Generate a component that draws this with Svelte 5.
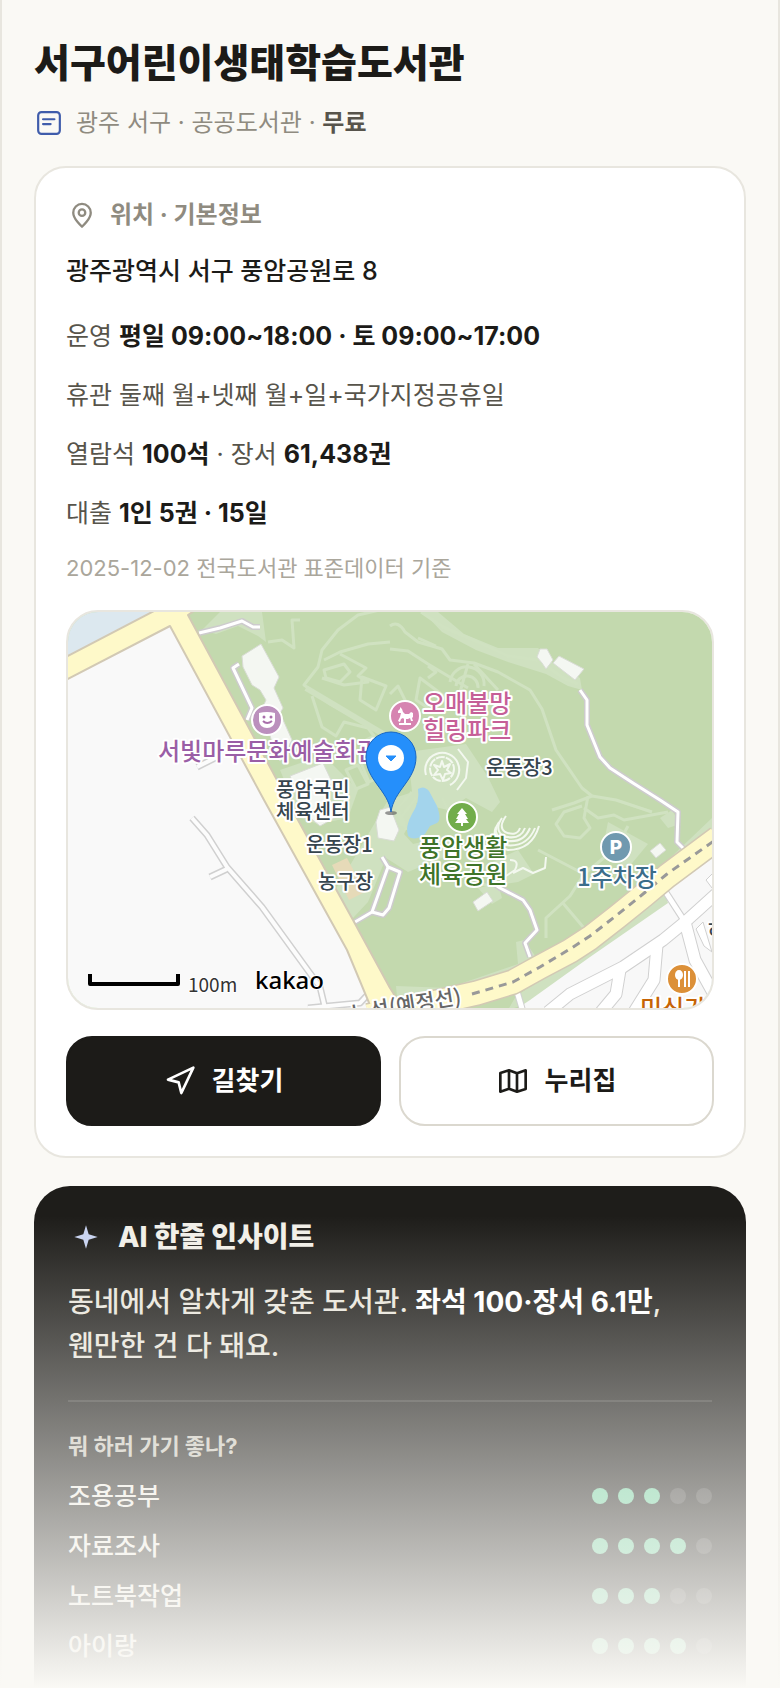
<script lang="ts">
  const library = {
    name: '서구어린이생태학습도서관',
    region: '광주 서구',
    type: '공공도서관',
    fee: '무료',
    address: '광주광역시 서구 풍암공원로 8',
    baseDate: '2025-12-02'
  };

  const purposes = [
    { name: '조용공부', score: 3 },
    { name: '자료조사', score: 4 },
    { name: '노트북작업', score: 3 },
    { name: '아이랑', score: 4 }
  ];

  const dots = [1, 2, 3, 4, 5];

  // 공원 산책로 (연한 초록)
  const trails = [
    'M353 0L375 15L410 30L440 44L470 48',
    'M322 14Q330 8 337 20L350 30L374 37L382 48L406 51L430 60L462 78L474 97L488 138L514 176L524 184',
    'M322 37L340 39L360 52L380 64L400 76',
    'M312 -2L290 3L270 18L254 38L250 55L236 73L262 92L290 108L320 126',
    'M322 30L300 32L272 40L256 48',
    'M272 42L298 56L290 64L300 70L276 73L254 66',
    'M256 58L276 52L282 60L272 70L258 66Z',
    'M294 65L318 74L308 98L292 88Z',
    'M244 84L254 115L268 124L276 110L300 116L306 124L290 132',
    'M200 30L214 28L226 36L224 8L232 8',
    'M480 55L495 66L510 72',
    'M382 70A17 17 0 0 1 416 74',
    'M388 74A11 11 0 0 1 410 76',
    'M400 52L392 80M406 52L430 78M368 34L350 26M360 54L368 60L360 66',
    'M352 66L376 84L366 100L348 88Z',
    'M322 82L330 74L338 90',
    'M524 184L506 191L484 198M524 184L548 188L584 200M520 184L516 206L522 216L512 226L496 224L488 212L496 200L514 194',
    'M516 196L530 206L546 203L556 208L600 200',
    'M470 238L516 262L502 284L478 306V326M494 290L516 316M516 262L548 236L560 214',
    'M344 180L330 196L334 214M348 186L334 204L338 218M374 186L380 198',
    'M278 158L290 153L300 172L288 177Z',
    'M293 151L302 147L310 166L301 170Z',
    'M400 260L414 272L430 276'
  ];

  // 차가 다니는 길
  const lanes = [
    'M131 21L152 16L174 9L185 15H192',
    'M171 52L165 56L184 96L179 108',
    'M512 78L519 88V113L532 145L542 156L565 171L592 188L610 200L609 230L617 238',
    'M420 268L432 276L455 288L462 298L469 318L457 331L462 345',
    'M314 245L320 255L304 300L287 310',
    'M320 255L332 260L321 296L315 303L304 300'
  ];

  const alleys = [
    'M124 206L139 223L159 255L194 295L252 375L257 396',
    'M142 265L159 257',
    'M129 155L149 145'
  ];

  const streets = [
    'M480 400L502 382L555 355L595 328L617 310L648 282',
    'M617 310L627 348L648 386',
    'M589 333L586 368L566 400',
    'M552 358L548 382L533 400'
  ];

  const places = [
    { text: '서빛마루문화예술회관', x: 90, y: 148, size: 24, color: '#9a5ea6' },
    { text: '오매불망', x: 355, y: 100, size: 24, color: '#c65f97' },
    { text: '힐링파크', x: 355, y: 127, size: 24, color: '#c65f97' },
    { text: '운동장3', x: 418, y: 163, size: 20, color: '#36454e' },
    { text: '풍암국민', x: 208, y: 185, size: 20, color: '#36454e' },
    { text: '체육센터', x: 208, y: 207, size: 20, color: '#36454e' },
    { text: '운동장1', x: 238, y: 240, size: 20, color: '#36454e' },
    { text: '농구장', x: 250, y: 277, size: 20, color: '#36454e' },
    { text: '풍암생활', x: 351, y: 244, size: 24, color: '#3f7429' },
    { text: '체육공원', x: 351, y: 271, size: 24, color: '#3f7429' },
    { text: '1주차장', x: 509, y: 274, size: 24, color: '#3b6d8a' },
    { text: '미식가', x: 572, y: 405, size: 24, color: '#c66405' },
    { text: '하', x: 640, y: 326, size: 20, color: '#36454e' }
  ];
</script>

<svelte:head>
  <title>{library.name}</title>
</svelte:head>

<main class="page">
  <header class="head">
    <h1>{library.name}</h1>
    <p class="sub">
      <svg class="sub-icon" viewBox="0 0 24 24" aria-hidden="true">
        <rect x="2" y="2" width="20" height="20" rx="3" />
        <path d="M6.500 8.500H17M6.500 13H13.500" />
      </svg>
      <span>{library.region} · {library.type} · <strong>{library.fee}</strong></span>
    </p>
  </header>

  <section class="card">
    <h2 class="card-title">
      <svg viewBox="0 0 24 24" aria-hidden="true">
        <path d="M12 22C12 22 4.500 15.500 4.500 10A7.500 7.500 0 0 1 19.500 10C19.500 15.500 12 22 12 22Z" />
        <circle cx="12" cy="10" r="2.800" />
      </svg>
      위치 · 기본정보
    </h2>

    <p class="address">{library.address}</p>

    <div class="info">
      <p>운영 <b>평일 09:00~18:00 · 토 09:00~17:00</b></p>
      <p>휴관 둘째 월+넷째 월+일+국가지정공휴일</p>
      <p>열람석 <b>100석</b> · 장서 <b>61,438권</b></p>
      <p>대출 <b>1인 5권 · 15일</b></p>
    </div>

    <p class="source">{library.baseDate} 전국도서관 표준데이터 기준</p>

    <div class="map">
      <svg viewBox="0 0 644 396" preserveAspectRatio="xMidYMid slice" role="img" aria-label="도서관 위치 지도">
        <rect width="644" height="396" fill="#c3d9ae" />

        <!-- 공원 안 밝은 구역 -->
        <g fill="#cfe1c0">
          <path d="M355 0H370L396 22L430 36L470 36L486 52L512 66L514 78L500 74L478 62L440 50L408 38L374 20Z" />
          <path d="M134 18L152 0H194L198 30L190 24L170 14L148 22Z" />
          <path d="M340 140L398 132L420 165L432 190L424 200L398 186L380 198L345 190Z" />
          <path d="M212 158L250 145L262 150L290 178L280 206L250 212L232 206Z" />
          <path d="M320 188L345 180L350 196L336 222L345 232L380 224L388 240L340 260L318 246L300 290L285 306L266 280L290 240Z" />
          <path d="M420 252L450 238L466 262L450 270L424 274Z" />
          <path d="M540 210L580 232L560 256L534 240Z" />
          <path d="M592 206L604 198L612 212L600 216Z" />
          <path d="M410 276L430 272L434 286L424 292Z" />
          <path d="M328 374L380 376L450 352L448 330L456 328L468 345L520 314L600 248L644 206V240L540 326L450 378L330 396Z" />
          <path d="M448 384L522 336L600 280L602 292L522 348L470 388L440 398Z" />
        </g>
        <g fill="none" stroke="#d0e2c1" stroke-width="3" stroke-linejoin="round">
          {#each trails as d}
            <path {d} />
          {/each}
        </g>
        <path d="M238 76L322 126" stroke="#cfe1c0" stroke-width="6" />

        <!-- 건물 -->
        <g fill="#f4f7f2" stroke="#d9dcd5" stroke-width="1">
          <path d="M193 32L174 44L175 55L184 73L192 78L198 88L195 95L205 135L212 149L224 128L212 101L215 96L206 76L211 65Z" />
          <path d="M472 37H479L485 48L478 57L474 51L469 45Z" />
          <path d="M491 44L516 57L507 68L485 51Z" />
          <path d="M405 290L419 280L425 289L410 299Z" />
          <path d="M582 239L592 231L598 238L588 246Z" />
          <path d="M312 198L322 195L331 218L326 229L310 226L308 210Z" />
          <path d="M222 164L255 151L264 170L258 186L270 204L252 214L240 204Z" />
        </g>
        <path d="M264 253L279 246L297 280L281 288Z" fill="#e6dab8" />
        <path
          d="M350 177Q356 173 361 179L369 194Q374 208 369 211L362 214L357 222Q346 230 340 224Q337 214 344 202Q352 190 350 177Z"
          fill="#a3d4ec"
        />

        <!-- 원형 광장과 야외무대 -->
        <g fill="none" stroke="#f3f8ef" stroke-width="2">
          <circle cx="374" cy="157" r="12" stroke-dasharray="9 1" />
          <path d="M358 163A17 17 0 1 1 382 173" />
          <path d="M390 137L400 150L398 166L389 178" />
          <path
            d="M374 149L376 155L382 152L379 158L383 161L377 162L375 168L372 162L366 163L370 158L366 153L372 155Z"
          />
          <path d="M438 204Q430 215 437 220Q449 225 452 216" />
          <path d="M434 206Q426 217 435 224Q452 229 457 216" />
          <path d="M431 210Q423 221 435 228Q455 233 462 216" />
          <path d="M428 215Q423 227 437 233Q459 236 467 216" />
          <path d="M426 222Q428 235 440 238Q464 238 471 214" />
          <path d="M478 245L477 256L465 261L455 256L445 261" />
          <path d="M442 248Q452 248 447 258L438 264" />
        </g>

        <!-- 남동쪽 시가지 -->
        <path d="M600 291L522 345L462 388L450 396H644V236L597 280Z" fill="#f8f8f8" />
        <g fill="none" stroke="#d0d0d0" stroke-width="13" stroke-linejoin="round">
          {#each streets as d}
            <path {d} />
          {/each}
          <path d="M595 276L617 310" stroke-width="7" />
          <path d="M448 376L455 400" stroke-width="7" />
        </g>
        <g fill="none" stroke="#fff" stroke-width="11" stroke-linejoin="round">
          {#each streets as d}
            <path {d} />
          {/each}
          <path d="M595 276L617 310" stroke-width="5" />
          <path d="M448 376L455 400" stroke-width="5" />
        </g>
        <g fill="#fff" stroke="#d0d0d0">
          <path d="M644 262L638 268L644 276" />
          <path d="M644 340L635 310L628 317L636 334Z" />
        </g>

        <!-- 북서쪽: 물가, 공터 -->
        <path d="M0 0H85L0 44Z" fill="#dce8ef" />
        <path d="M0 67L102 14L196 188L279 338L312 396H0Z" fill="#f9f9f9" />
        <g fill="none" stroke="#d0d0d0" stroke-width="7" stroke-linejoin="round">
          {#each alleys as d}
            <path {d} />
          {/each}
          <path d="M240 396L292 391L306 376" />
        </g>
        <g fill="none" stroke="#fcfcfc" stroke-width="4" stroke-linejoin="round">
          {#each alleys as d}
            <path {d} />
          {/each}
          <path d="M240 396L292 391L306 376" />
        </g>

        <g fill="none" stroke="#cdcbcd" stroke-width="6" stroke-linejoin="round">
          {#each lanes as d}
            <path {d} />
          {/each}
        </g>
        <g fill="none" stroke="#fff" stroke-width="3" stroke-linejoin="round">
          {#each lanes as d}
            <path {d} />
          {/each}
        </g>

        <!-- 큰길 -->
        <g stroke="#d2c9b4" stroke-width="2">
          <path
            d="M300 404L360 392L409 381L445 370L472 355L502 339L522 326L549 305L575 284L599 264L650 226"
            fill="none"
            stroke-width="26"
          />
          <path d="M-2 45L86 -1H126L120 3L209 168L230 208L285 308L322 376L336 398H304L279 338L196 188L102 14L-2 68Z" fill="#fef9c9" />
        </g>
        <path
          d="M300 404L360 392L409 381L445 370L472 355L502 339L522 326L549 305L575 284L599 264L650 226"
          fill="none"
          stroke="#fef9c9"
          stroke-width="23"
        />
        <path
          d="M404 382L445 370L472 355L502 337L522 324L549 303L575 282L599 262L650 226"
          fill="none"
          stroke="#999"
          stroke-width="3"
          stroke-dasharray="8 6"
        />

        <!-- 장소 이름 -->
        <g class="label">
          {#each places as p}
            <text x={p.x} y={p.y} font-size={p.size} fill={p.color}>{p.text}</text>
          {/each}
          <text x="284" y="409" font-size="21" fill="#666" transform="rotate(-9 284 409)">노선(예정선)</text>
          <text class="scale" x="120" y="380" font-size="19" fill="#333">100m</text>
          <text class="brand" x="187" y="377" font-size="24" fill="#000">kakao</text>
        </g>
        <path d="M22 362V372H110V362" fill="none" stroke="#000" stroke-width="4" />

        <!-- 장소 아이콘 -->
        <g transform="translate(199 108)">
          <circle r="15" fill="#bb90bd" stroke="#fff" stroke-width="2" />
          <path d="M-8 -7Q0 -9 8 -7V1Q7 8 0 8T-8 1Z" fill="#fff" />
          <circle cx="-3" cy="-3" r="1.500" fill="#a96fab" />
          <circle cx="4" cy="-3" r="1.500" fill="#a96fab" />
          <path d="M-4 1Q0 5 5 1" fill="none" stroke="#a96fab" stroke-width="2" />
        </g>
        <g transform="translate(337 104)">
          <circle r="15" fill="#d684b1" stroke="#fff" stroke-width="2" />
          <path
            d="M-7 -5L-5 -7V-9L-3 -7L-2 -4L0 -2H4L6 -4L8 -3V1L7 2L8 5L6 5L5 2L3 3H1V7H6V9H-6V7H-1V3L-2 2L-4 3L-5 6L-7 5L-5 1L-4 -3L-7 -3Z"
            fill="#fff"
          />
        </g>
        <g transform="translate(394 205)">
          <circle r="15" fill="#72ad4b" stroke="#fff" stroke-width="2" />
          <path d="M0 -9L5 -3H3L6 2H4L7 6H1V9H-1V6H-7L-4 2H-6L-3 -3H-5Z" fill="#fff" />
        </g>
        <g transform="translate(548 235)">
          <circle r="15" fill="#7099af" stroke="#fff" stroke-width="2" />
          <text class="parking" y="7" font-size="19" text-anchor="middle" fill="#fff">P</text>
        </g>
        <g transform="translate(614 367)">
          <circle r="15" fill="#dc9038" stroke="#fff" stroke-width="2" />
          <ellipse cx="-3" cy="-4" rx="4" ry="5" fill="#fff" />
          <path d="M-3 0V8M3 -8V8M7 -8V8" stroke="#fff" stroke-width="2" />
        </g>

        <!-- 도서관 핀 -->
        <ellipse cx="323" cy="201" rx="6" ry="2" fill="#555" opacity="0.6" />
        <path
          d="M323 200C320 178 298 168 298 145A25 25 0 0 1 348 145C348 168 326 178 323 200Z"
          fill="#258ffb"
          stroke="#1766c4"
        />
        <circle cx="323" cy="146" r="13" fill="#fff" />
        <path d="M318 144H328L323 149Z" fill="#258ffb" stroke="#258ffb" stroke-linejoin="round" />
      </svg>
    </div>

    <div class="actions">
      <a class="btn primary" href="#directions">
        <svg viewBox="0 0 24 24" aria-hidden="true">
          <path d="M3 11L22 2L13 21L11 13Z" />
        </svg>
        길찾기
      </a>
      <a class="btn" href="#homepage">
        <svg viewBox="0 0 24 24" aria-hidden="true">
          <path d="M2.500 6L9 4L15 6.200L21.500 4V18L15 20L9 17.800L2.500 20ZM9 4V17.800M15 6.200V20" />
        </svg>
        누리집
      </a>
    </div>
  </section>

  <section class="insight">
    <h2>
      <svg viewBox="0 0 24 24" aria-hidden="true">
        <path d="M12 2L14.300 9.700L22 12L14.300 14.300L12 22L9.700 14.300L2 12L9.700 9.700Z" />
      </svg>
      AI 한줄 인사이트
    </h2>
    <p class="summary">
      동네에서 알차게 갖춘 도서관. <b>좌석 100·장서 6.1만</b>,<br />웬만한 건 다 돼요.
    </p>
    <div class="purposes">
      <h3>뭐 하러 가기 좋나?</h3>
      <ul>
        {#each purposes as purpose}
          <li>
            <span>{purpose.name}</span>
            <span class="dots" role="img" aria-label="5점 중 {purpose.score}점">
              {#each dots as n}
                <i class:on={n <= purpose.score}></i>
              {/each}
            </span>
          </li>
        {/each}
      </ul>
    </div>
  </section>

  <div class="fade"></div>
</main>

<style>
  :global(body) {
    background: #faf9f5;
  }

  .page {
    position: relative;
    box-sizing: border-box;
    display: flex;
    flex-direction: column;
    min-height: 100vh;
    padding: 39px 32px 0;
    border: solid #e8e6df;
    border-width: 0 2px;
    background: #faf9f5;
    color: #1c1b18;
    font-family: Inter, 'Noto Sans CJK KR', sans-serif;
    font-size: 24px;
  }

  h1, h2, h3, p, ul {
    margin: 0;
    padding: 0;
  }

  h1 {
    font-size: 39px;
    font-weight: 800;
    line-height: 48px;
  }

  .sub {
    display: flex;
    align-items: center;
    gap: 12px;
    margin-top: 19px;
    line-height: 34px;
    color: #8f8b80;
  }

  .sub strong {
    font-weight: 600;
    color: #57544b;
  }

  svg {
    flex: none;
    fill: none;
    stroke: currentColor;
    stroke-width: 2;
    stroke-linecap: round;
    stroke-linejoin: round;
  }

  .sub-icon {
    width: 26px;
    height: 26px;
    padding: 0 2px;
    color: #3f5cab;
  }

  .card {
    margin-top: 26px;
    padding: 30px;
    border: 2px solid #e8e6df;
    border-radius: 32px;
    background: #fff;
  }

  .card-title {
    display: flex;
    align-items: center;
    gap: 14px;
    font-size: 24px;
    font-weight: 700;
    line-height: 34px;
    color: #8f8b80;
  }

  .card-title svg {
    width: 28px;
    height: 28px;
    padding-left: 2px;
  }

  .address {
    margin-top: 19px;
    font-size: 25px;
    font-weight: 500;
    line-height: 40px;
  }

  .info {
    display: grid;
    gap: 19px;
    margin-top: 25px;
    font-size: 25px;
    line-height: 40px;
    color: #57544b;
  }

  .info b {
    font-weight: 700;
    color: #1c1b18;
  }

  .source {
    margin-top: 18px;
    font-size: 22px;
    line-height: 34px;
    color: #aaa69b;
  }

  .map {
    margin-top: 25px;
    border: 2px solid #e8e6df;
    border-radius: 32px;
    overflow: hidden;
  }

  .map svg {
    display: block;
    width: 100%;
    stroke: none;
    stroke-width: 1;
    stroke-linecap: butt;
  }

  .label text {
    font-family: 'Noto Sans CJK KR', sans-serif;
    font-weight: 500;
    stroke: #fff;
    stroke-width: 4;
    stroke-linejoin: round;
    paint-order: stroke;
  }

  .label .scale {
    font-weight: 400;
    stroke-width: 2;
  }

  .label .brand {
    font-family: 'Noto Sans', sans-serif;
    stroke-width: 2;
  }

  .parking {
    font-weight: 800;
  }

  .actions {
    display: grid;
    grid-template-columns: 1fr 1fr;
    gap: 18px;
    margin-top: 26px;
  }

  .btn {
    display: flex;
    align-items: center;
    justify-content: center;
    gap: 16px;
    padding: 23px;
    border: 2px solid #dbd8cf;
    border-radius: 26px;
    background: #fff;
    color: #1c1b18;
    font-size: 26px;
    font-weight: 700;
    line-height: 40px;
    text-decoration: none;
  }

  .btn svg {
    width: 32px;
    height: 32px;
  }

  .btn.primary {
    border-color: #1c1b18;
    background: #1c1b18;
    color: #fff;
  }

  .insight {
    flex: 1;
    margin-top: 28px;
    padding: 31px 34px 17px;
    border-radius: 36px 36px 0 0;
    background: #1e1d1a;
    color: #f1efe8;
  }

  .insight h2 {
    display: flex;
    align-items: center;
    gap: 14px;
    font-size: 28px;
    font-weight: 800;
    line-height: 40px;
  }

  .insight h2 svg {
    width: 28px;
    height: 28px;
    padding: 0 4px;
    fill: #c7d2f0;
    stroke: none;
  }

  .summary {
    margin-top: 23px;
    font-size: 28px;
    font-weight: 500;
    line-height: 44px;
    color: #e8e5dc;
  }

  .summary b {
    font-weight: 700;
    color: #fff;
  }

  .purposes {
    margin-top: 32px;
    padding-top: 28px;
    border-top: 2px solid rgba(255, 255, 255, 0.12);
  }

  .purposes h3 {
    margin-bottom: 9px;
    font-size: 22px;
    font-weight: 700;
    line-height: 32px;
    color: #c9c6bc;
  }

  .purposes ul {
    list-style: none;
  }

  .purposes li {
    display: flex;
    align-items: center;
    justify-content: space-between;
    font-size: 25px;
    font-weight: 500;
    line-height: 50px;
  }

  .dots {
    display: flex;
    gap: 10px;
  }

  .dots i {
    width: 16px;
    height: 16px;
    border-radius: 50%;
    background: rgba(255, 255, 255, 0.15);
  }

  .dots i.on {
    background: #6fcf9f;
  }

  .fade {
    position: absolute;
    right: -2px;
    bottom: 0;
    left: -2px;
    height: 472px;
    background: linear-gradient(rgba(250, 249, 245, 0), #faf9f5);
    pointer-events: none;
  }
</style>
